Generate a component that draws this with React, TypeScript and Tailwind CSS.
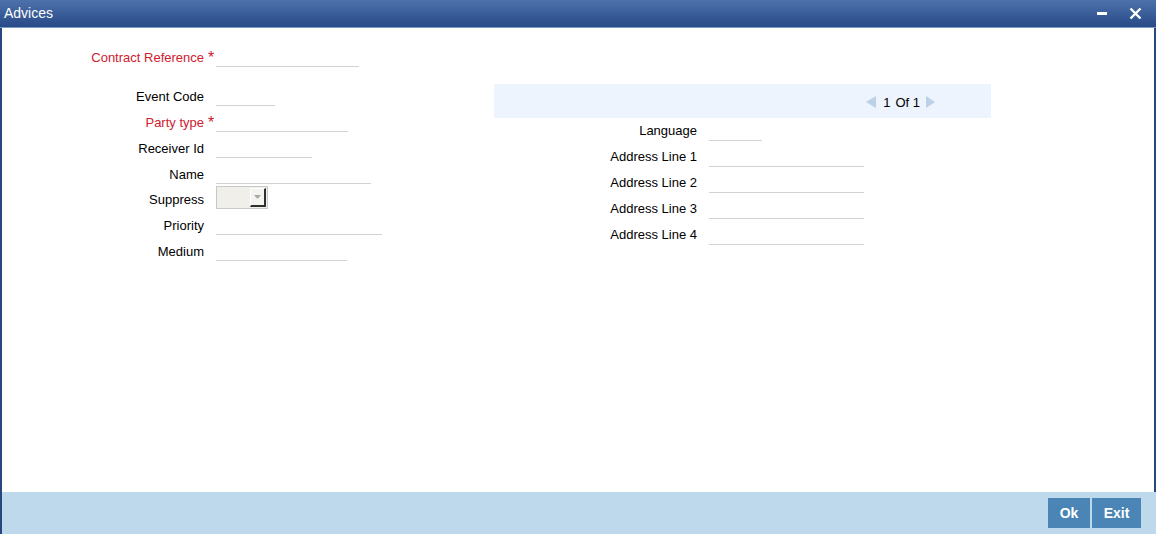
import React from "react";

const font = { fontFamily: '"Liberation Sans", Arial, sans-serif' };

function Field({ label, width, required }: { label: string; width: number; required?: boolean }) {
  return (
    <div className="flex items-end h-[26px]">
      <div className="w-[216px] shrink-0 flex justify-end pr-[12px] pb-[3px]">
        <span className={required ? "text-[#d0202e] text-[13px] leading-none relative" : "text-black text-[13px] leading-none"}>
          {label}
          {required && <span className="absolute left-full ml-[4px] top-[-1px] text-[16px]">*</span>}
        </span>
      </div>
      <div className="h-[1px] bg-[#d2d2d2]" style={{ width }} />
    </div>
  );
}

function RField({ label, width }: { label: string; width: number }) {
  return (
    <div className="flex items-end h-[26px]">
      <div className="w-[709px] shrink-0 flex justify-end pr-[12px] pb-[4px]">
        <span className="text-black text-[13px] leading-none">{label}</span>
      </div>
      <div className="h-[1px] bg-[#d2d2d2]" style={{ width }} />
    </div>
  );
}

export default function App() {
  return (
    <div className="w-[1156px] h-[541px] bg-white relative overflow-hidden" style={font}>
      <div className="h-[534px] flex flex-col border-l-2 border-r-2 border-[#27487f]">
        <div className="h-[28px] bg-gradient-to-b from-[#4d72ab] to-[#284a88] flex items-center justify-between border-b border-[#7d9ac0] -mx-[2px] px-[4px]">
          <span className="text-white text-[14px] leading-none -mt-[2px]">Advices</span>
          <div className="flex items-center gap-[22px] pr-[10px]">
            <div className="w-[10px] h-[3px] bg-white" />
            <svg width="13" height="13" viewBox="0 0 13 13">
              <path d="M1.5 1.5 L11.5 11.5 M11.5 1.5 L1.5 11.5" stroke="white" strokeWidth="2.4" />
            </svg>
          </div>
        </div>
        <div className="flex-1 relative">
          <div className="absolute left-[-2px] top-0 w-full">
            <div className="pt-[15px]">
              <div className="flex items-end h-[24px]">
                <div className="w-[216px] shrink-0 flex justify-end pr-[12px] pb-[3px]">
                  <span className="text-[#d0202e] text-[13px] leading-none relative">
                    Contract Reference
                    <span className="absolute left-full ml-[4px] top-[-1px] text-[16px]">*</span>
                  </span>
                </div>
                <div className="h-[1px] bg-[#d2d2d2] w-[143px]" />
              </div>
            </div>
          </div>
          <div className="absolute left-[-2px] top-[52px]">
            <Field label="Event Code" width={59} />
            <Field label="Party type" width={132} required />
            <Field label="Receiver Id" width={96} />
            <Field label="Name" width={155} />
            <div className="flex items-center h-[26px]">
              <div className="w-[216px] shrink-0 flex justify-end pr-[12px] pt-[5px]">
                <span className="text-black text-[13px] leading-none">Suppress</span>
              </div>
              <div className="w-[52px] h-[23px] border border-[#c9c9c9] bg-[#f0efea] flex items-center justify-end pr-[1px]">
                <div className="w-[16px] h-[19px] bg-[#f3f3f0] border-r-2 border-b-2 border-[#2f2f2f] border-l border-t border-l-white border-t-white flex items-center justify-center">
                  <svg width="7" height="4" viewBox="0 0 7 4"><path d="M0 0 L7 0 L3.5 4 Z" fill="#a8a8a8" /></svg>
                </div>
              </div>
            </div>
            <div className="-mt-[1px]">
              <Field label="Priority" width={166} />
              <Field label="Medium" width={131} />
            </div>
          </div>
          <div className="absolute left-[492px] top-[56px] w-[497px] h-[34px] bg-[#edf4fd] flex items-center justify-end pr-[55px]">
            <div className="flex items-center gap-[6px] pt-[2px]">
              <svg width="12" height="12" viewBox="0 0 12 12"><path d="M11 0 L11 12 L1 6 Z" fill="#bcd0e8" /></svg>
              <span className="text-[13px] text-black leading-none">1</span>
              <span className="text-[13px] text-black leading-none -ml-[1px]">Of 1</span>
              <svg width="10" height="12" viewBox="0 0 10 12"><path d="M0 0 L0 12 L9 6 Z" fill="#bcd0e8" /></svg>
            </div>
          </div>
          <div className="absolute left-[-2px] top-[87px]">
            <RField label="Language" width={53} />
            <RField label="Address Line 1" width={155} />
            <RField label="Address Line 2" width={155} />
            <RField label="Address Line 3" width={155} />
            <RField label="Address Line 4" width={155} />
          </div>
        </div>
        <div className="h-[42px] bg-[#bed9ec] -mr-[2px] flex items-center justify-end pr-[15px] gap-[2px]">
          <button className="w-[42px] h-[30px] bg-[#4a85b5] text-white text-[14px] font-bold">Ok</button>
          <button className="w-[49px] h-[30px] bg-[#4a85b5] text-white text-[14px] font-bold">Exit</button>
        </div>
      </div>
    </div>
  );
}
